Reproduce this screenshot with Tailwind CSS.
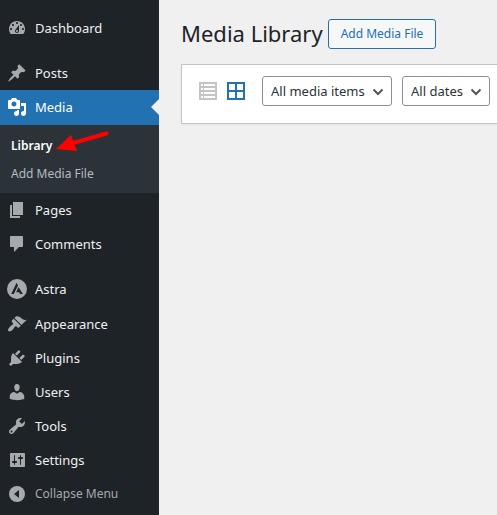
<!DOCTYPE html>
<html lang="en">
<head>
    <meta charset="UTF-8">
    <meta name="viewport" content="width=device-width, initial-scale=1.0">
    <title>Media Library</title>
    <script src="https://cdn.jsdelivr.net/npm/@tailwindcss/browser@4"></script>
</head>
<body class="bg-[#f0f0f1] font-['Segoe_UI','Noto_Sans',sans-serif] text-[13px] leading-5 text-[#2c3338]">
    <div class="flex min-h-screen">
        <!-- Admin menu -->
        <nav class="w-[159px] shrink-0 bg-[#1d2327] pt-[11px] text-[#f0f0f1]">
            <ul>
                <li>
                    <a href="#dashboard" class="flex h-[34px] items-center gap-2 pl-[7px]">
                        <svg class="size-5 fill-[#a7aaad]" viewBox="0 0 20 20"><path d="M3.76 16h12.48c1.1-1.37 1.76-3.11 1.76-5 0-4.42-3.58-8-8-8s-8 3.58-8 8c0 1.89.66 3.63 1.76 5zM10 4c.55 0 1 .45 1 1s-.45 1-1 1-1-.45-1-1 .45-1 1-1zM6 6c.55 0 1 .45 1 1s-.45 1-1 1-1-.45-1-1 .45-1 1-1zm8 0c.55 0 1 .45 1 1s-.45 1-1 1-1-.45-1-1 .45-1 1-1zm-5.37 5.55L12 7v6c0 1.1-.9 2-2 2s-2-.9-2-2c0-.57.24-1.08.63-1.45zM4 10c.55 0 1 .45 1 1s-.45 1-1 1-1-.45-1-1 .45-1 1-1zm12 0c.55 0 1 .45 1 1s-.45 1-1 1-1-.45-1-1 .45-1 1-1zm-5 3c0-.55-.45-1-1-1s-1 .45-1 1 .45 1 1 1 1-.45 1-1z"/></svg>
                        Dashboard
                    </a>
                </li>
                <li class="mt-[11px]">
                    <a href="#posts" class="flex h-[34px] items-center gap-2 pl-[7px]">
                        <svg class="size-5 fill-[#a7aaad]" viewBox="0 0 20 20"><path d="M10.44 3.02l1.82-1.82 6.36 6.35-1.83 1.82c-1.05-.68-2.48-.57-3.41.36l-.75.75c-.92.93-1.04 2.35-.35 3.41l-1.83 1.82-2.41-2.41-2.8 2.79c-.42.42-3.38 2.71-3.8 2.29s1.86-3.39 2.28-3.81l2.79-2.79L4.1 9.36l1.83-1.82c1.05.69 2.48.57 3.4-.36l.75-.75c.93-.92 1.05-2.35.36-3.41z"/></svg>
                        Posts
                    </a>
                </li>
                <li class="relative">
                    <a href="#media" class="relative flex h-[35px] items-center gap-2 bg-[#2271b1] pb-px pl-[7px] text-white">
                        <svg class="size-5 fill-white" viewBox="0 0 20 20"><path d="M13 11V4c0-.55-.45-1-1-1h-1.67L9 1H5L3.67 3H2c-.55 0-1 .45-1 1v7c0 .55.45 1 1 1h10c.55 0 1-.45 1-1zM7 4.5c1.38 0 2.5 1.12 2.5 2.5S8.38 9.5 7 9.5 4.5 8.38 4.5 7 5.62 4.5 7 4.5zM14 6h5v10.5c0 1.38-1.12 2.5-2.5 2.5S14 17.88 14 16.5s1.12-2.5 2.5-2.5c.17 0 .34.02.5.05V9h-3V6zm-4 8.05V13h2v3.5c0 1.38-1.12 2.5-2.5 2.5S7 17.88 7 16.5 8.12 14 9.5 14c.17 0 .34.02.5.05z"/></svg>
                        Media
                        <span class="absolute right-0 top-[9px] border-y-8 border-r-8 border-y-transparent border-r-[#f0f0f1]"></span>
                    </a>
                    <ul class="bg-[#2c3338] pt-[7px] pb-[5px]">
                        <li><a href="#library" class="flex h-7 items-center pl-[11px] text-xs font-semibold text-white">Library</a></li>
                        <li><a href="#add" class="flex h-7 items-center pl-[11px] text-xs text-[#b5bcc2]">Add Media File</a></li>
                    </ul>
                    <!-- Arrow pointing at Library -->
                    <svg class="absolute left-14 top-10 h-6 w-14" viewBox="0 0 56 24">
                        <path d="M50.500 3.500L17 13" stroke="#f00" stroke-width="4" stroke-linecap="round" fill="none"/>
                        <path d="M0 19L15 5L21 21Z" fill="#f00"/>
                    </svg>
                </li>
                <li>
                    <a href="#pages" class="flex h-[34px] items-center gap-2 pl-[7px]">
                        <svg class="size-5 fill-[#a7aaad]" viewBox="0 0 20 20"><path d="M6 15V2h10v13H6zm-1 1h8v2H3V5h2v11z"/></svg>
                        Pages
                    </a>
                </li>
                <li>
                    <a href="#comments" class="flex h-[34px] items-center gap-2 pl-[7px]">
                        <svg class="size-5 fill-[#a7aaad]" viewBox="0 0 20 20"><path d="M4 2h11c.55 0 1 .45 1 1v9c0 .55-.45 1-1 1h-3l-5 5v-5H4c-.55 0-1-.45-1-1V3c0-.55.45-1 1-1z"/></svg>
                        Comments
                    </a>
                </li>
                <li class="mt-[11px]">
                    <a href="#astra" class="flex h-[35px] items-center gap-2 pb-px pl-[7px]">
                        <svg class="size-5" viewBox="0 0 20 20">
                            <circle cx="10" cy="10" r="10" fill="#a7aaad"/>
                            <path d="M9.600 3.800L11 6.500L6.800 15H4.200ZM11.500 8L15.800 15H13L12.200 13.200H9.200Z" fill="#1d2327"/>
                        </svg>
                        Astra
                    </a>
                </li>
                <li>
                    <a href="#appearance" class="flex h-[34px] items-center gap-2 pl-[7px]">
                        <svg class="size-5 fill-[#a7aaad]" viewBox="0 0 20 20"><path d="M14.48 11.06L7.41 3.99l1.5-1.5c.5-.56 2.3-.47 3.51.32 1.21.8 1.43 1.28 2.91 2.1 1.18.64 2.45 1.26 4.45.85zm-.71.71L6.7 4.7 4.93 6.47c-.39.39-.39 1.02 0 1.41l1.06 1.06c.39.39.39 1.03 0 1.42-.6.6-1.43 1.11-2.21 1.69-.35.26-.7.53-1.01.84C1.43 14.23.4 16.08 1.4 17.07c.99 1 2.84-.03 4.18-1.36.31-.31.58-.66.85-1.02.57-.78 1.08-1.61 1.69-2.21.39-.39 1.02-.39 1.41 0l1.06 1.06c.39.39 1.02.39 1.41 0z"/></svg>
                        Appearance
                    </a>
                </li>
                <li>
                    <a href="#plugins" class="flex h-[34px] items-center gap-2 pl-[7px]">
                        <svg class="size-5 fill-[#a7aaad]" viewBox="0 0 20 20"><path d="M13.11 4.36L9.87 7.6 8 5.73l3.24-3.24c.35-.34 1.05-.2 1.56.32.52.51.66 1.21.31 1.55zm-8 1.77l.91-1.12 9.01 9.01-1.19.84c-.71.71-2.63 1.16-3.82 1.16H6.14L4.9 17.26c-.59.59-1.54.59-2.12 0-.59-.58-.59-1.53 0-2.12l1.24-1.24v-3.88c0-1.13.4-3.19 1.09-3.89zm7.26 3.97l3.24-3.24c.34-.35 1.04-.21 1.55.31.52.51.66 1.21.31 1.55l-3.24 3.25z"/></svg>
                        Plugins
                    </a>
                </li>
                <li>
                    <a href="#users" class="flex h-[34px] items-center gap-2 pl-[7px]">
                        <svg class="size-5 fill-[#a7aaad]" viewBox="0 0 20 20"><path d="M10 9.25c-2.27 0-2.73-3.44-2.73-3.44C7 4.02 7.82 2 9.97 2c2.16 0 2.98 2.02 2.71 3.81 0 0-.41 3.44-2.68 3.44zm0 2.57L12.72 10c2.39 0 4.52 2.33 4.52 4.53v2.49s-3.65 1.13-7.24 1.13c-3.65 0-7.24-1.13-7.24-1.13v-2.49c0-2.25 1.94-4.48 4.47-4.48z"/></svg>
                        Users
                    </a>
                </li>
                <li>
                    <a href="#tools" class="flex h-[34px] items-center gap-2 pl-[7px]">
                        <svg class="size-5 fill-[#a7aaad]" viewBox="0 0 20 20"><path d="M16.68 9.77c-1.34 1.34-3.3 1.67-4.95.99l-5.41 6.52c-.99.99-2.59.99-3.58 0s-.99-2.59 0-3.57l6.52-5.42c-.68-1.65-.35-3.61.99-4.95 1.28-1.28 3.12-1.62 4.72-1.06l-2.89 2.89 2.82 2.82 2.86-2.87c.53 1.58.18 3.39-1.08 4.65zM3.81 16.21c.4.39 1.04.39 1.43 0 .4-.4.4-1.04 0-1.43-.39-.4-1.03-.4-1.43 0-.39.39-.39 1.03 0 1.43z"/></svg>
                        Tools
                    </a>
                </li>
                <li>
                    <a href="#settings" class="flex h-[34px] items-center gap-2 pl-[7px]">
                        <svg class="size-5 fill-[#a7aaad]" viewBox="0 0 20 20"><path d="M18 16V4c0-.55-.45-1-1-1H4c-.55 0-1 .45-1 1v12c0 .55.45 1 1 1h13c.55 0 1-.45 1-1zM8 11h1c.55 0 1 .45 1 1s-.45 1-1 1H8v1.500c0 .28-.22.5-.5.5s-.5-.22-.5-.5V13H6c-.55 0-1-.45-1-1s.45-1 1-1h1V5.500c0-.28.22-.5.5-.5s.5.22.5.5V11zm5-2h-1c-.55 0-1-.45-1-1s.45-1 1-1h1V5.500c0-.28.22-.5.5-.5s.5.22.5.5V7h1c.55 0 1 .45 1 1s-.45 1-1 1h-1v5.500c0 .28-.22.5-.5.5s-.5-.22-.5-.5V9z"/></svg>
                        Settings
                    </a>
                </li>
                <li>
                    <button type="button" class="flex h-[34px] w-full items-center gap-2 pl-[7px] text-xs text-[#a7aaad]">
                        <svg class="size-5" viewBox="0 0 20 20">
                            <circle cx="10" cy="10" r="8" fill="#a7aaad"/>
                            <path d="M12 6v8l-5-4z" fill="#1d2327"/>
                        </svg>
                        Collapse Menu
                    </button>
                </li>
            </ul>
        </nav>

        <!-- Content -->
        <main class="min-w-0 flex-1 overflow-hidden pl-[22px] pt-[19px]">
            <div class="flex items-start gap-[5px]">
                <h1 class="text-[22px] leading-7 whitespace-nowrap text-[#1d2327]">Media Library</h1>
                <button type="button" class="h-[30px] shrink-0 rounded-[3px] border border-[#2271b1] bg-[#f6f7f7] px-3 text-xs whitespace-nowrap text-[#2271b1]">Add Media File</button>
            </div>

            <!-- Toolbar -->
            <div class="mt-[15px] flex h-[60px] items-start gap-[10px] border border-r-0 border-[#c3c4c7] bg-white pt-[11px] pl-[17px] shadow-xs">
                <a href="#list" aria-label="List view" class="flex h-[30px] items-center">
                    <svg class="size-[18px]" viewBox="0 0 18 18" shape-rendering="crispEdges">
                        <path d="M0 0h18v18H0z" fill="#c3c4c7"/>
                        <path d="M2 2h2v2H2zM5 2h11v2H5zM2 6h2v2H2zM5 6h11v2H5zM2 10h2v2H2zM5 10h11v2H5zM2 14h2v2H2zM5 14h11v2H5z" fill="#fff"/>
                    </svg>
                </a>
                <a href="#grid" aria-label="Grid view" class="flex h-[30px] items-center">
                    <svg class="size-[18px]" viewBox="0 0 18 18" shape-rendering="crispEdges">
                        <path d="M0 0h18v18H0z" fill="#2271b1"/>
                        <path d="M2 2h6v6H2zM10 2h6v6h-6zM2 10h6v6H2zM10 10h6v6h-6z" fill="#fff"/>
                    </svg>
                </a>
                <div class="relative ml-[7px] shrink-0">
                    <select aria-label="Filter by type" class="h-[30px] w-[130px] appearance-none rounded-[3px] border border-[#8c8f94] bg-white pl-2 text-[13px]">
                        <option>All media items</option>
                        <option>Images</option>
                        <option>Audio</option>
                        <option>Video</option>
                    </select>
                    <svg class="pointer-events-none absolute right-2 top-[10px] h-3 w-3" viewBox="0 0 12 12"><path d="M1.500 3.500L6 8L10.500 3.500" fill="none" stroke="#555" stroke-width="2"/></svg>
                </div>
                <div class="relative shrink-0">
                    <select aria-label="Filter by date" class="h-[30px] w-[88px] appearance-none rounded-[3px] border border-[#8c8f94] bg-white pl-2 text-[13px]">
                        <option>All dates</option>
                    </select>
                    <svg class="pointer-events-none absolute right-2 top-[10px] h-3 w-3" viewBox="0 0 12 12"><path d="M1.500 3.500L6 8L10.500 3.500" fill="none" stroke="#555" stroke-width="2"/></svg>
                </div>
            </div>
        </main>
    </div>
</body>
</html>
